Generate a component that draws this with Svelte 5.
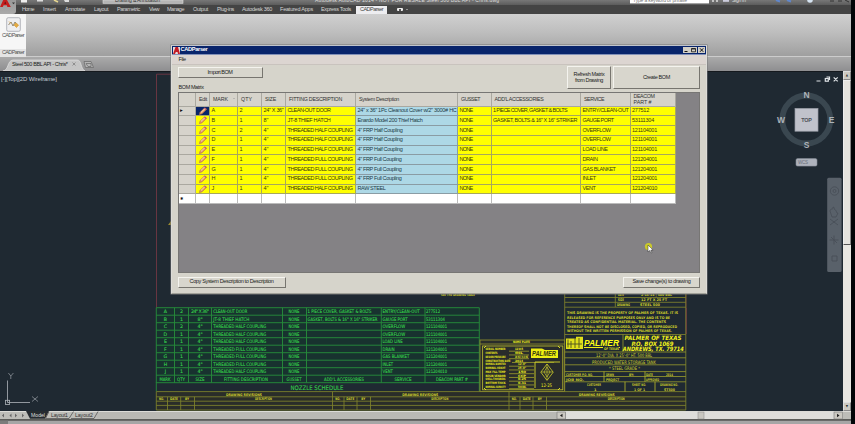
<script>
  // Stretches or tightens the tracking of a label to a fixed width.
  function fit(node, width) {
    if (!width) return;
    const natural = node.getBoundingClientRect().width;
    node.style.letterSpacing = (width - natural) / node.textContent.length + 'px';
  }

  const tabs = [
    ['Home', 22, 12], ['Insert', 43, 13], ['Annotate', 65, 20], ['Layout', 94, 14],
    ['Parametric', 117, 23], ['View', 149, 10], ['Manage', 167, 17], ['Output', 193, 15],
    ['Plug-ins', 217, 17], ['Autodesk 360', 242, 30], ['Featured Apps', 280, 33], ['Express Tools', 321, 30]
  ];
  const tabGap = (i) => (i === 0 ? tabs[0][1] : tabs[i][1] - tabs[i - 1][1] - tabs[i - 1][2]);

  const heads = [
    ['', 0], ['Edit', 8], ['MARK', 15], ['QTY', 11], ['SIZE', 11], ['FITTING DESCRIPTION', 53],
    ['System Description', 40], ['GUSSET', 19], ['ADD\'L ACCESSORIES', 49], ['SERVICE', 20]
  ];
  const rows = [
    ['A', '2', '24" X 36"', 'CLEAN-OUT DOOR', '24" x 36" 1Pc Cleanout Cover w/2" 3000# HC', '1 PIECE COVER, GASKET & BOLTS', 'ENTRY/CLEAN-OUT', '277512'],
    ['B', '1', '8"', 'JT-8 THIEF HATCH', 'Enardo Model 200 Thief Hatch', 'GASKET, BOLTS & 16" X 16" STRIKER', 'GAUGE PORT', '53111304'],
    ['C', '2', '4"', 'THREADED HALF COUPLING', '4" FRP Half Coupling', '', 'OVERFLOW', '121104001'],
    ['D', '1', '4"', 'THREADED HALF COUPLING', '4" FRP Half Coupling', '', 'OVERFLOW', '121104001'],
    ['E', '1', '4"', 'THREADED HALF COUPLING', '4" FRP Half Coupling', '', 'LOAD LINE', '121104001'],
    ['F', '1', '4"', 'THREADED FULL COUPLING', '4" FRP Full Coupling', '', 'DRAIN', '121204001'],
    ['G', '1', '4"', 'THREADED FULL COUPLING', '4" FRP Full Coupling', '', 'GAS BLANKET', '121204001'],
    ['H', '1', '4"', 'THREADED FULL COUPLING', '4" FRP Full Coupling', '', 'INLET', '121204001'],
    ['J', '1', '4"', 'THREADED HALF COUPLING', 'RAW STEEL', '', 'VENT', '121204010']
  ];
  const descW = [43, 43, 65, 65, 65, 65, 65, 65, 65];
  const sysW = [99, 65, 45, 45, 45, 44, 44, 44, 28];
  const accW = [74, 84];
  const svcW = [46, 31, 28, 28, 25, 15, 33, 13, 13];
  const partW = [17, 22, 25, 25, 25, 25, 25, 25, 25];

  const rowY = (i) => 307.7 + i * 7.5;
  const greenX = [156.3, 174.5, 188.5, 211.5, 282.5, 306.5, 381.3, 425, 479.3];
  const schedW = [34, 36, 53, 53, 53, 53, 53, 53, 53];
  const foot = [
    ['MARK', 165, 11], ['QTY', 181, 8], ['SIZE', 200, 9], ['FITTING DESCRIPTION', 246, 44],
    ['GUSSET', 294, 15], ['ADD\'L ACCESSORIES', 344, 40], ['SERVICE', 403, 17], ['DEACOM PART #', 452, 32]
  ];
  const revX = [156.3, 167.5, 180.7, 194.5, 332.5, 344, 357, 370.5, 509, 520, 533, 546.5];
  const notice = [
    ['THIS DRAWING IS THE PROPERTY OF PALMER OF TEXAS.  IT IS', 111],
    ['RELEASED FOR REFERENCE PURPOSES ONLY AND IS TO BE', 103],
    ['TREATED AS CONFIDENTIAL MATERIAL.  THE CONTENTS', 99],
    ['THEREOF SHALL NOT BE DISCLOSED, COPIED, OR REPRODUCED', 110],
    ['WITHOUT THE WRITTEN PERMISSION OF PALMER OF TEXAS.', 105]
  ];
  const plate = [
    ['SERIAL NUMBER', '12345'], ['CONTENTS', 'OIL'], ['DESIGN PRESSURE', '16 OZ / 0.4 OZ'],
    ['CONSTRUCTION DATE', '2014'], ['NOMINAL DIAMETER', "12'-0\""], ['NOMINAL HEIGHT', "25'-0\""],
    ['MAX FILL TEMP', '150'], ['RESIN VENDOR', 'CCP'], ['SHELL THICKNESS', '0.25'],
    ['BOTTOM THICK', '0.31'], ['NOMINAL CAPACITY', '500 BBL']
  ];
</script>

{#snippet pencil()}
  <svg class="pencil" viewBox="0 0 10 9">
    <path d="M1.2 8 L2 5.6 L6.6 1 L8.6 2.6 L4 7.2 Z" fill="#e89a62" stroke="#b06a50" stroke-width=".7" />
    <path d="M2.8 5.8 L7 1.8" stroke="#ffe6cc" stroke-width=".9" />
    <path d="M6.6 1 L8.6 2.6" stroke="#bd5b70" stroke-width="1.2" />
  </svg>
{/snippet}

<div class="screen">
  <header>
    <div class="titlebar">
      <svg class="quick" width="855" height="8">
        <rect x="21" y="0" width="6" height="2.5" fill="#eee" />
        <rect x="37" y="0" width="6" height="1.5" fill="#ddd" />
        <path d="M54 0l4 2" stroke="#e8d890" stroke-width="1.5" />
        <path d="M64 0h5v2h-4" fill="#ddd" />
        <rect x="103" y="0" width="80" height="3.3" fill="#b5b5b5" stroke="#ddd" stroke-width=".6" />
        <text x="115" y="2" textLength="45" class="tt" fill="#333">Drafting &amp; Annotation</text>
        <text x="315" y="2" textLength="184" class="tt" fill="#ddd">Autodesk AutoCAD 2014 - NOT FOR RESALE   Steel 500 BBL API - Chris.dwg</text>
        <rect x="630" y="0" width="79" height="3.4" fill="#fff" />
        <text x="633" y="1.8" textLength="54" class="tt" fill="#777">Type a keyword or phrase</text>
        <path d="M713 0v2M717 0v2" stroke="#ddd" stroke-width="1.5" />
        <rect x="723" y="0" width="6" height="1.8" fill="#ccd" />
        <text x="732" y="1.8" textLength="14" class="tt" fill="#ddd">Sign In</text>
        <path d="M776 0l4 1.5M787 0l4 1.5" stroke="#6087cc" stroke-width="2" />
        <circle cx="810" cy="0" r="2.8" fill="#d5e3f0" />
        <path d="M830 1h4M838 1h4M845 0l4 2" stroke="#333" stroke-width="1" />
      </svg>
    </div>
    <nav>
      {#each tabs as [name, , w], i}
        <span class="tab" style="margin-left:{tabGap(i)}px;width:{w}px"><span use:fit={w}>{name}</span></span>
      {/each}
      <span class="tab active"><span use:fit={23}>CADParser</span></span>
      <i class="rec"><b></b></i><span class="caret"></span>
    </nav>
    <div class="applogo">
      <svg width="16" height="14">
        <path d="M0 7 L3.2 0 H7 L10.8 7 H7.4 L6.8 5.2 H3.6 L2.8 7 Z" fill="#c51c1c" />
        <path d="M4.3 3.8L5.2 1.4L6.1 3.8Z" fill="#4b1414" /><path d="M12 2.5h3l-1.5 1.8z" fill="#333" />
      </svg>
    </div>
    <div class="ribbon">
      <div class="panel">
        <svg width="15" height="15">
          <rect x=".7" y=".7" width="13.6" height="13.6" rx="1.5" fill="#eeeef0" stroke="#a3a6ad" stroke-width=".8" />
          <path d="M2.5 8l2.5-3 2 4 2-4 3 4" fill="none" stroke="#92866c" stroke-width="1" />
          <path d="M3 4.5l2 2M8 8l2-2 2.5 2-2 2.5z" stroke="#d9a23c" fill="#e4ab45" stroke-width=".8" />
        </svg>
        <span use:fit={22}>CADParser</span>
        <span class="ptitle"><span use:fit={22}>CADParser</span></span>
      </div>
    </div>
    <div class="files">
      <svg width="100" height="14">
        <path d="M3 14 C9 13 7 3.5 13 3 H77 C82 3 80 11 85 14 Z" fill="#c5c5c5" stroke="#e2e2e2" stroke-width=".7" />
        <text x="12" y="9.2" textLength="56" font-size="5.5" fill="#222">Steel 500 BBL API - Chris*</text>
        <path d="M72.5 5.5l3 3m0-3l-3 3" stroke="#777" stroke-width=".7" />
        <path d="M84 4.5h7l2.500 6h-8zM86 6.500h5v3h-3z" fill="#b5b5b5" stroke="#666" stroke-width=".7" />
      </svg>
    </div>
  </header>

  <main>
    <svg class="drawing" width="843" height="340" viewBox="0 71 843 340">
      <rect x="0" y="71" width="843" height="340" fill="#1f2932" />
      <path d="M0 71.5H843" stroke="#15191e" />
      <text x="1" y="80.7" textLength="56" font-size="6" fill="#c5cad0">[-][Top][2D Wireframe]</text>
      <path d="M156.5 308V74.2H686V308" fill="none" stroke="#713743" stroke-width=".9" />
      <path d="M686.3 308V334" stroke="#8b3050" stroke-width=".8" />
      <path d="M168 225l3-4v4z" fill="#9a8a30" />

      <g stroke="#aeb4ba" stroke-width=".8" fill="none">
        <path d="M7.5 380.5V402.5H30" /><rect x="5.4" y="400.3" width="4.2" height="4.2" />
        <path d="M8.4 373l2.4 3 2.6-3M10.8 376v3M32 396.5l6 5M38 396.5l-6 5" stroke-width=".6" />
      </g>

      <!-- nozzle schedule -->
      <rect x="156.3" y="307.7" width="323" height="75" fill="#18322f" />
      <g stroke="#268a3a" stroke-width=".95" fill="none">
        {#each Array(11) as _, i}<path d="M156.3 {rowY(i)}H479.3" />{/each}
        {#each greenX as x}<path d="M{x} 307.7V382.7" />{/each}
        <path d="M156.3 382V391.5M479.3 382V391.5" />
      </g>
      <g class="cad" fill="#35cc4a" stroke="#35cc4a" stroke-width=".12">
        {#each rows as r, i}
          {@const y = rowY(i) + 5.5}
          <text x="165.4" {y} text-anchor="middle">{r[0]}</text>
          <text x="181.4" {y} text-anchor="middle">{r[1]}</text>
          {#if i === 0}<text x="191" {y} textLength="18">{r[2]}</text>{:else}<text x="200" {y} text-anchor="middle">{r[2]}</text>{/if}
          <text x="213.3" {y} textLength={schedW[i]} lengthAdjust="spacingAndGlyphs">{r[3]}</text>
          <text x="288.5" {y} textLength="11" lengthAdjust="spacingAndGlyphs">NONE</text>
          {#if r[5]}<text x="307.5" {y} textLength={i ? 70 : 64} lengthAdjust="spacingAndGlyphs">{r[5]}</text>{/if}
          <text x="382.5" {y} textLength={svcW[i] * 0.81} lengthAdjust="spacingAndGlyphs">{r[6]}</text>
          <text x="426" {y} textLength={i === 0 ? 14 : i === 1 ? 19 : 21} lengthAdjust="spacingAndGlyphs">{r[7]}</text>
        {/each}
        {#each foot as [t, x, w]}
          <text x={x - w / 2} y="381" textLength={w} lengthAdjust="spacingAndGlyphs">{t}</text>
        {/each}
        <text x="290.5" y="389.8" textLength="53" lengthAdjust="spacingAndGlyphs" class="sched">NOZZLE SCHEDULE</text>
      </g>

      <!-- revision strips -->
      <rect x="156.3" y="391.6" width="529.5" height="18.5" fill="#2a2d29" />
      <g stroke="#80832c" stroke-width=".85" fill="none">
        {#each [391.6, 396.8, 401.2, 405.4, 410] as y}<path d="M156.3 {y}H685.8" />{/each}
        {#each revX as x}<path d="M{x} {x === 156.3 || x === 332.5 || x === 509 ? 391.6 : 396.8}V410" />{/each}
        <path d="M685.8 293V410" />
      </g>
      <g class="cad tiny" fill="#d0d02d">
        {#each [0, 176.3, 352.7] as dx}
          <text x={226 + dx} y="395.7" textLength="36" lengthAdjust="spacingAndGlyphs">DRAWING REVISIONS</text>
          <text x={159 + dx} y="400.4" textLength="5" lengthAdjust="spacingAndGlyphs">NO.</text>
          <text x={170 + dx} y="400.4" textLength="8" lengthAdjust="spacingAndGlyphs">DATE</text>
          <text x={185 + dx} y="400.4" textLength="4" lengthAdjust="spacingAndGlyphs">BY</text>
          <text x={255 + dx} y="400.4" textLength="17" lengthAdjust="spacingAndGlyphs">DESCRIPTION</text>
        {/each}
        <text x="441" y="296.3" textLength="34" lengthAdjust="spacingAndGlyphs">SEE THE DRAWING TABLE</text>
      </g>

      <!-- name plate -->
      <g stroke="#89892d" stroke-width=".9" fill="#292c2b">
        <rect x="480" y="340" width="84.5" height="51.5" /><path d="M480 344H564.5" />
        <rect x="482.6" y="346" width="80.2" height="43.8" stroke="#b2b22f" />
        <path d="M535 362V388M535 362H560" stroke="#d7d728" />
        <path d="M484 348l2-2M560 348l-2-2M484 388l2 2M560 388l-2 2" stroke="#eded25" />
      </g>
      <g class="cad plate" fill="#f0f01b">
        <text x="513" y="343.3" textLength="17" lengthAdjust="spacingAndGlyphs">NAME PLATE</text>
        {#each plate as [k, v], i}
          <text x="485.5" y={350.4 + i * 3.75} textLength={i === 3 ? 25 : i === 1 ? 12 : 20} lengthAdjust="spacingAndGlyphs">{k}</text>
          <text x={i < 4 ? 515 : 518} y={350.4 + i * 3.75} textLength={i === 2 ? 13 : 8} lengthAdjust="spacingAndGlyphs">{v}</text>
          <path d="M{i === 3 ? 512 : 509} {351.2 + i * 3.75}h{i < 3 ? 20 : i === 3 ? 42 : 25}" stroke="#c8c82b" stroke-width=".6" />
        {/each}
      </g>
      <path d="M531 348.5H542L545 350H558V358H531Z" fill="#eeee12" />
      <text x="532" y="356.3" textLength="24" lengthAdjust="spacingAndGlyphs" class="logo" font-size="7" fill="#393910">PALMER</text>
      <path d="M547 364l6.2 8.2-6.2 8.2-6.2-8.2z" fill="none" stroke="#d0d02b" stroke-width=".8" />
      <path d="M547 367l3 5-3 5-3-5zM541 372H553M547 364V380" fill="none" stroke="#d5d52b" stroke-width=".6" />
      <text x="541" y="387.3" textLength="11" lengthAdjust="spacingAndGlyphs" class="cad" fill="#eeee19">12-25</text>

      <!-- title block -->
      <g stroke="#7f812d" stroke-width=".85" fill="none">
        <path d="M564.7 293V391.6M615.3 293V307M564.7 297.5H685.8M564.7 302.3H685.8M564.7 307.2H685.8M564.7 334.5H685.8" />
        <path d="M564.7 352H685.8M564.7 357.8H685.8M564.7 364.8H685.8M564.7 371.6H685.8M564.7 376.5H685.8M564.7 381.8H685.8M623 334.5V352" stroke="#94962c" />
        <path d="M604 371.6V381.8M645 371.6V381.8M625 381.8V391.6M655 381.8V391.6" stroke="#b5b52b" />
      </g>
      <g class="cad tiny" fill="#d2d22a">
        <text x="618" y="296.4" textLength="6" lengthAdjust="spacingAndGlyphs">DATE</text><text x="641" y="296.4" textLength="31" lengthAdjust="spacingAndGlyphs">2-15-14 | 500 BBL</text>
        <text x="618" y="301.2" textLength="6" lengthAdjust="spacingAndGlyphs">SIZE</text><text x="641" y="301.2" textLength="26" lengthAdjust="spacingAndGlyphs">12 FT X 25 FT</text>
        <text x="617" y="306" textLength="13" lengthAdjust="spacingAndGlyphs">DRAWING</text><text x="640" y="306" textLength="20" lengthAdjust="spacingAndGlyphs">STEEL 500</text>
        {#each notice as [t, w], i}
          <text x="567" y={314.3 + i * 4.4} textLength={w} lengthAdjust="spacingAndGlyphs">{t}</text>
        {/each}
      </g>
      <path d="M566 338.5H576V336.7H583V349H566Z" fill="#e0e01b" />
      <path d="M568 339.5v8M571 341v7M575 338v10M579 338v10M567 344h15" stroke="#4d5020" stroke-width=".9" />
      <text x="584" y="345.9" textLength="35" lengthAdjust="spacingAndGlyphs" class="logo" font-size="9.5" fill="#ffff14">PALMER</text>
      <path d="M584 347.5H603M619 347.5H620" stroke="#eeee17" stroke-width="1.2" />
      <text x="604" y="349.5" textLength="15" lengthAdjust="spacingAndGlyphs" class="cad tiny" fill="#dddd22">OF TEXAS</text>
      <g class="cad bold" fill="#f4f41b">
        <text x="624.5" y="340.3" textLength="57" lengthAdjust="spacingAndGlyphs">PALMER OF TEXAS</text>
        <text x="631.5" y="345.7" textLength="42" lengthAdjust="spacingAndGlyphs">P.O. BOX 1069</text>
        <text x="622.8" y="351.1" textLength="61" lengthAdjust="spacingAndGlyphs">ANDREWS, TX. 79714</text>
      </g>
      <g class="cad" fill="#cfcf2b">
        <text x="596" y="356.8" textLength="56" lengthAdjust="spacingAndGlyphs">12'-0" DIA. X 25'-0" HT. 500 BBL</text>
        <text x="592" y="363.6" textLength="64" lengthAdjust="spacingAndGlyphs">PRODUCED WATER STORAGE TANK</text>
        <text x="609" y="370" textLength="31" lengthAdjust="spacingAndGlyphs">* STEEL GRADE *</text>
      </g>
      <g class="cad tiny" fill="#c8c82b">
        <text x="566" y="375.6" textLength="27" lengthAdjust="spacingAndGlyphs">CUSTOMER P.O. NO.</text><text x="606" y="375.6" textLength="8" lengthAdjust="spacingAndGlyphs">DRWN</text><text x="629" y="375.6" textLength="5" lengthAdjust="spacingAndGlyphs">BY:</text>
        <text x="646" y="375.6" textLength="7" lengthAdjust="spacingAndGlyphs">DATE</text><text x="666" y="375.6" textLength="7" lengthAdjust="spacingAndGlyphs">2014</text>
        <text x="566" y="380.6" textLength="18" lengthAdjust="spacingAndGlyphs">JOB NO.</text><text x="606" y="380.6" textLength="13" lengthAdjust="spacingAndGlyphs">PROJECT</text><text x="646" y="380.6" textLength="13" lengthAdjust="spacingAndGlyphs">APPROVED</text>
        <text x="587" y="385.7" textLength="14" lengthAdjust="spacingAndGlyphs">CUSTOMER</text><text x="632" y="385.7" textLength="14" lengthAdjust="spacingAndGlyphs">SHEET NO.</text><text x="660" y="385.7" textLength="18" lengthAdjust="spacingAndGlyphs">DRAWING NO.</text>
        <text x="594" y="390.6">1</text><text x="634" y="390.6" textLength="11" lengthAdjust="spacingAndGlyphs">1 OF 1</text><text x="664" y="390.6" textLength="11" lengthAdjust="spacingAndGlyphs">ST500</text>
      </g>

      <!-- view cube -->
      <circle cx="806.3" cy="119.5" r="24" fill="none" stroke="#3a4750" stroke-width="5.8" />
      <g class="compass" text-anchor="middle">
        <text x="806.5" y="98">N</text><text x="806.5" y="148">S</text><text x="781" y="123.2">W</text><text x="831.5" y="123.2">E</text>
      </g>
      <rect x="795" y="108.4" width="23" height="22.8" fill="#c0c2cb" stroke="#979ba5" stroke-width=".7" />
      <text x="801.3" y="121.6" textLength="10.5" font-size="5.4" font-weight="bold" fill="#4c4f58">TOP</text>
      <rect x="796" y="158.6" width="21" height="7.5" rx="1.5" fill="#aeb2bc" stroke="#858b95" stroke-width=".6" />
      <text x="798" y="164.2" textLength="10" font-size="4.5" fill="#686e7b">WCS</text>
      <g stroke="#dfe3e6" fill="none" stroke-width="1.2">
        <path d="M816.5 81H820.5M833.7 77.3l4 4m0-4l-4 4" /><rect x="825.3" y="78.5" width="3" height="2.7" /><path d="M826.5 77h3v3" />
      </g>
      <rect x="827.2" y="177.700" width="14.400" height="94.200" rx="1.500" fill="#59616a" />
      <g stroke="#484f58" fill="none" stroke-width=".9">
        <circle cx="834.5" cy="191" r="4.2" /><circle cx="834.5" cy="191" r="1.5" />
        <path d="M830 211c1-4 3 0 3-4 2 0 1 3 2 3 2 0 1 4 3 3l-2 4h-4zM830 219l8 6M838 219l-8 6" />
        <path d="M829.500 240h9M834 235.500v9M831 237l6 6M832 256h5v5h-5z" />
      </g>
    </svg>
    <aside class="vscroll">
      <i class="up">▲</i><i class="thumb"></i><span></span><i class="up">▼</i>
    </aside>
  </main>

  <footer>
    <svg width="851" height="13">
      <rect width="851" height="8" fill="#bdbdb8" /><rect y="0" width="851" height="1" fill="#dcdcd8" />
      <rect x="97" y="1" width="462" height="6.5" fill="#b9b9b4" />
      <rect x="566" y="1" width="277" height="7" fill="#dededb" />
      <rect x="557" y="1" width="8.5" height="7" fill="#cbc9c2" stroke="#777" stroke-width=".6" /><path d="M562.5 2.7v3.6l-2.5-1.8z" fill="#222" />
      <rect x="698" y="1" width="6" height="7" fill="#c8c7c1" stroke="#888" stroke-width=".5" />
      <rect x="834" y="1" width="8.5" height="7" fill="#cbc9c2" stroke="#777" stroke-width=".6" /><path d="M837 2.7v3.6l2.5-1.8z" fill="#222" />
      <path d="M4 2.5v4l-2-2zM11.500 2.500v4l-2-2zM15 2.500v4l2-2zM22 2.500v4l2-2z" fill="#666" />
      <path d="M26 0H49L45 7.700H30Z" fill="#262b30" />
      <path d="M49 .5L45.500 7.500H69L73.500 .5M71 7.500H94L98 .5" fill="none" stroke="#555" stroke-width=".8" />
      <text x="31" y="6.300" textLength="14" font-size="5.200" fill="#ddd">Model</text>
      <text x="51" y="6.300" textLength="17" font-size="5.200" fill="#333">Layout1</text>
      <text x="75" y="6.300" textLength="18" font-size="5.200" fill="#333">Layout2</text>
      <rect y="8.200" width="851" height="1.500" fill="#73736f" />
      <rect y="9.700" width="851" height="4" fill="#a6a6a6" /><rect y="9.700" width="8" height="4" fill="#7c7c7c" />
    </svg>
  </footer>

  <section class="dialog">
    <div class="dtitle">
      <svg width="7" height="7"><rect width="7" height="7" fill="#e8dada" /><path d="M0 7L2.500 0H5L7 7H5L4.500 5H2.800L2 7Z" fill="#c21b25" /></svg>
      <b use:fit={27}>CADParser</b>
      <span class="controls">
        <i><svg viewBox="0 0 7 6"><path d="M1.500 4.500h3" stroke="#111" /></svg></i>
        <i><svg viewBox="0 0 7 6"><path d="M1.500 1.500h4v3.300h-4zM1.500 2h4" stroke="#111" stroke-width=".8" fill="none" /></svg></i>
        <i><svg viewBox="0 0 7 6"><path d="M2 1.300l3.300 3.500m0-3.500l-3.300 3.500" stroke="#111" /></svg></i>
      </span>
    </div>
    <div class="dmenu"><span use:fit={7}>File</span></div>
    <div class="dbody">
      <div class="toolbar">
        <button class="import"><span use:fit={25}>Import BOM</span></button>
        <button class="refresh"><span use:fit={31}>Refresh Matrix</span><span use:fit={28}>from Drawing</span></button>
        <button class="create"><span use:fit={27}>Create BOM</span></button>
      </div>
      <div class="label"><span use:fit={25}>BOM Matrix</span></div>
      <div class="grid">
        <div class="row head">
          {#each heads as [h, w], i}
            <div class="c c{i}"><span use:fit={w}>{h}</span>{#if i === 2}<em></em>{/if}</div>
          {/each}
          <div class="c c10 two"><span use:fit={21}>DEACOM</span><span use:fit={18}>PART #</span></div>
        </div>
        {#each rows as r, i}
          <div class="row">
            <div class="c c0 sel">{i === 0 ? '▸' : ''}</div>
            <div class="c c1" class:picked={i === 0}>{@render pencil()}</div>
            <div class="c c2">{r[0]}</div>
            <div class="c c3">{r[1]}</div>
            <div class="c c4"><span use:fit={i === 0 ? 20 : 5}>{r[2]}</span></div>
            <div class="c c5"><span use:fit={descW[i]}>{r[3]}</span></div>
            <div class="c c6 blue"><span use:fit={sysW[i]}>{r[4]}</span></div>
            <div class="c c7"><span use:fit={13}>NONE</span></div>
            <div class="c c8"><span use:fit={accW[i]}>{r[5]}</span></div>
            <div class="c c9"><span use:fit={svcW[i]}>{r[6]}</span></div>
            <div class="c c10"><span use:fit={partW[i]}>{r[7]}</span></div>
          </div>
        {/each}
        <div class="row blank">
          {#each Array(11) as _, i}<div class="c c{i}" class:sel={i === 0}>{i === 0 ? '✱' : ''}</div>{/each}
        </div>
      </div>
      <div class="actions">
        <button class="copy"><span use:fit={84}>Copy System Description to Description</span></button>
        <button class="save"><span use:fit={58}>Save change(s) to drawing</span></button>
      </div>
    </div>
  </section>

  <svg class="cursor" width="14" height="14">
    <circle cx="5.500" cy="5.500" r="3.600" fill="#d0cf20" opacity=".9" />
    <path d="M5 4v7l1.700-1.500 1.300 2.500 1-.5-1.200-2.400h2.300z" fill="#fff" stroke="#333" stroke-width=".5" />
  </svg>
</div>

<style>
  :global(body) { margin: 0; background: #000; }
  .screen { position: relative; width: 855px; height: 424px; overflow: hidden; background: #020608; display: flex; flex-direction: column; font: 5.5px/1 "Liberation Sans", Arial, sans-serif; color: #222; }
  .screen span { white-space: pre; }
  svg { display: block; flex: none; }
  header { width: 851px; position: relative; }
  .titlebar { height: 5px; background: linear-gradient(#777, #5c5c5c); overflow: hidden; }
  .tt { font-size: 5px; }
  nav { height: 9px; background: #444; color: #d5d5d5; display: flex; align-items: center; }
  .tab { flex: none; }
  .tab.active { margin-left: 5px; height: 8px; width: 31px; background: #ededf0; color: #444; display: flex; align-items: center; justify-content: center; align-self: flex-end; }
  .rec { width: 6px; height: 3.5px; background: #eee; margin-left: 10px; border-radius: 1px; display: flex; justify-content: center; align-items: center; }
  .rec b { width: 2px; height: 2px; background: #555; }
  .caret { border: 1.3px solid transparent; border-top-color: #ddd; margin: 1px 0 0 3px; }
  .applogo { position: absolute; left: 0; top: 0; width: 16px; height: 13.5px; background: linear-gradient(#999, #aaa); border-radius: 0 0 3px 0; }
  .ribbon { height: 43px; background: linear-gradient(#d0d0d0, #bdbdbd 45%, #9f9f9f); border-bottom: 1px solid #ccc; box-sizing: border-box; display: flex; }
  .panel { width: 26px; height: 43px; background: #f6f6f6; color: #555; display: flex; flex-direction: column; align-items: center; padding-top: 3px; box-sizing: border-box; }
  .panel > span:not(.ptitle) { margin-top: 1px; }
  .ptitle { margin-top: 10px; width: 26px; height: 8px; background: #e4e4e4; display: flex; justify-content: center; align-items: center; }
  .files { height: 14px; background: linear-gradient(#aaa, #8e8e90); }
  main { display: flex; width: 851px; height: 340px; }
  .vscroll { width: 8px; background: #e9e7e2; display: flex; flex-direction: column; color: #333; }
  .vscroll span { flex: 1; }
  .up { height: 9px; box-sizing: border-box; background: #ccc9c1; border: 1px outset #ddd; font: 3px/7px "DejaVu Sans", sans-serif; text-align: center; }
  .thumb { height: 165px; box-sizing: border-box; background: #e5e3de; border: 1px solid #eee; border-bottom: 1px solid #555; border-right-color: #888; }
  footer { height: 13px; }
  .cad { font-size: 4.7px; font-family: "DejaVu Sans", sans-serif; }
  .cad.tiny { font-size: 3.6px; font-weight: bold; }
  .cad.plate { font-size: 3px; font-weight: bold; }
  .cad.bold { font-size: 6px; font-weight: bold; font-style: italic; }
  .sched { font-size: 6.2px; }
  .logo { font-family: "Liberation Sans", Arial, sans-serif; font-weight: 900; font-style: italic; }
  .compass { font-size: 8.5px; font-weight: bold; fill: #adb3b9; }

  .dialog { position: absolute; left: 170.5px; top: 45px; width: 536px; height: 248.5px; box-sizing: border-box; background: #d6d4cb; border: 1.5px solid #dddcd8; border-top-color: #c0c4cc; border-bottom-color: #a1a199; display: flex; flex-direction: column; box-shadow: 0 0 0 .5px #777; }
  .dtitle { height: 9px; background: #08246b; color: #fff; display: flex; align-items: center; padding: 0 1px; gap: 1px; font-size: 5.7px; border-bottom: 1px solid #8190b8; box-sizing: border-box; }
  .controls { margin-left: auto; display: flex; }
  .controls i { width: 7px; height: 6px; background: #d2cfc7; margin-left: .5px; }
  .controls svg { width: 7px; height: 6px; }
  .dmenu { height: 10px; background: #dcd5d1; border-bottom: 1px solid #c9c3be; padding-left: 7px; display: flex; align-items: center; box-sizing: border-box; }
  .dbody { padding: 0 5.5px 0 6px; flex: 1; display: flex; flex-direction: column; }
  .toolbar { display: flex; flex: none; align-items: flex-start; height: 19px; padding-top: 1px; box-sizing: border-box; }
  button { font: inherit; color: #222; background: #d8d6cd; padding: 0; box-sizing: border-box; border: 1px solid; border-color: #f4f3ee #77756f #77756f #f4f3ee; display: flex; flex: none; flex-direction: column; align-items: center; justify-content: center; gap: .5px; }
  .import { width: 85px; height: 11px; margin-top: 1px; }
  .refresh { width: 44px; height: 23px; margin-left: auto; }
  .create { width: 87px; height: 23px; margin-left: 2px; }
  .label { flex: none; height: 8px; padding-left: 1px; box-sizing: border-box; line-height: 6px; }
  .grid { flex: none; height: 180.5px; background: #848285; border: 1px solid #777674; box-sizing: border-box; }
  .row { display: flex; height: 9.75px; }
  .head { height: 13.5px; }
  .c { box-sizing: border-box; flex: none; height: 100%; display: flex; align-items: center; overflow: hidden; padding-left: 1.5px; background: #ff0; border-right: 1px solid #a7a75c; border-bottom: 1px solid #a7a75c; color: #3c3c0c; }
  .head .c { background: #d6d3cb; color: #333; border-color: #aaa8a0; padding-left: 3px; font-size: 5.3px; }
  .head .two { flex-direction: column; align-items: flex-start; justify-content: center; gap: .5px; }
  .head em { border: 1.3px solid transparent; border-bottom-color: #999; margin: 0 0 2px 5px; }
  .row .sel { background: #d6d3cb; color: #111; border-color: #aaa8a0; font-family: "DejaVu Sans", sans-serif; }
  .blank .c { background: #fff; border-color: #bbb; font-size: 4px; }
  .c.blue { background: #add8e6; border-color: #8a9ca4; color: #223b46; }
  .c.picked { background: #08246b; }
  .c0 { width: 17.5px; } .c1 { width: 14px; } .c2 { width: 28px; } .c3 { width: 24px; } .c4 { width: 24px; }
  .c5 { width: 70px; } .c6 { width: 102px; } .c7 { width: 33.5px; } .c8 { width: 89.5px; } .c9 { width: 49.5px; } .c10 { width: 45px; }
  .pencil { width: 10px; height: 8.5px; margin-left: .5px; }
  .actions { display: flex; justify-content: space-between; margin-top: 4px; }
  .actions button { height: 11px; }
  .copy { width: 108px; } .save { width: 77px; }
  .cursor { position: absolute; left: 643px; top: 241px; }
</style>
